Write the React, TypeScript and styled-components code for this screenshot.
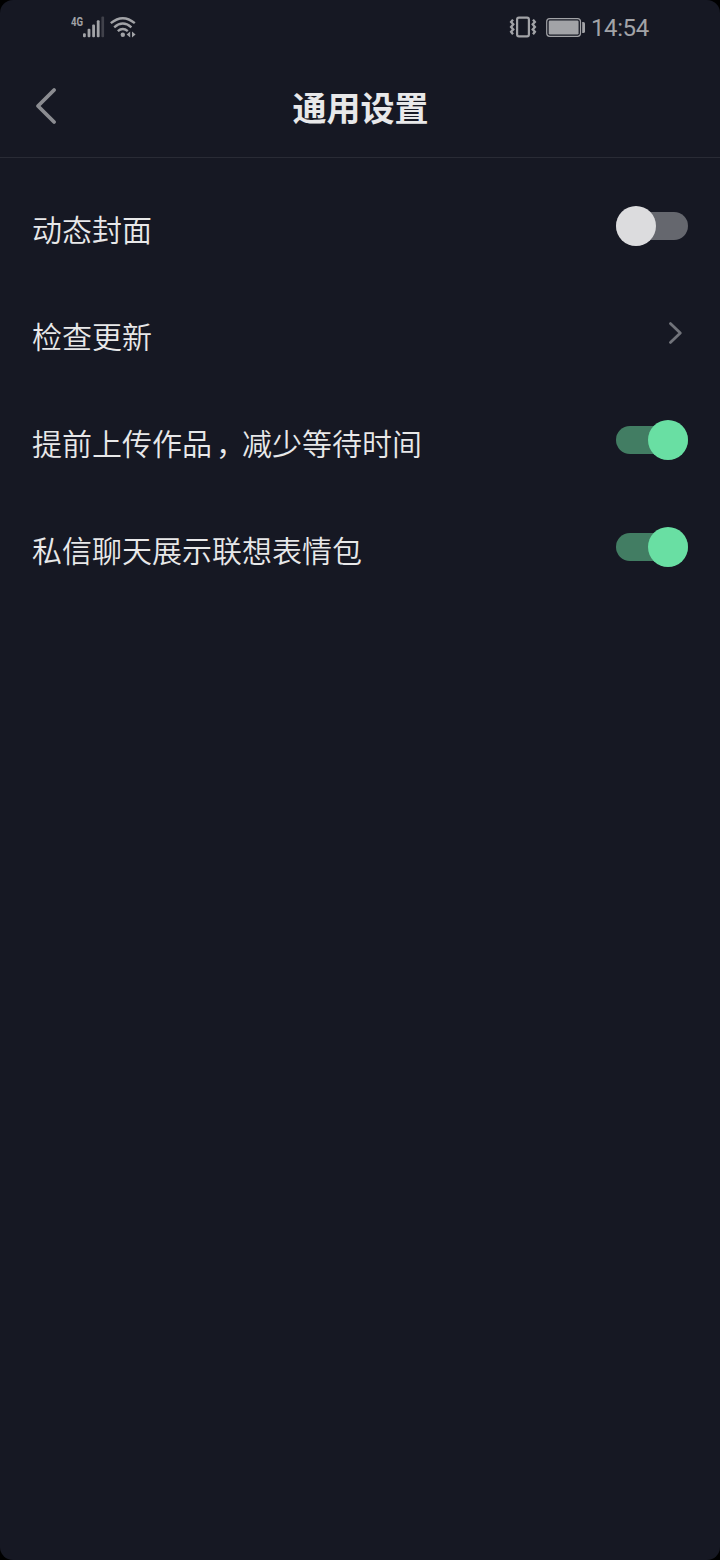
import React, { useState } from "react";
import styled, { createGlobalStyle } from "styled-components";

const GlobalStyle = createGlobalStyle`
  * { box-sizing: border-box; }
  body { margin: 0; background: #000; }
`;

const Screen = styled.main`
  display: flex;
  flex-direction: column;
  width: 720px;
  height: 1560px;
  border-radius: 13px;
  overflow: hidden;
  background: #161823;
  color: #e8e8e9;
  font-family: "Noto Sans CJK SC", sans-serif;
`;

const StatusBar = styled.div`
  display: flex;
  justify-content: space-between;
  height: 56px;
  padding: 0 70px 0 71px;
  color: #a2a3a7;
`;

const StatusGroup = styled.div`
  display: flex;
  align-items: flex-start;
`;

const Network = styled.span`
  width: 12px;
  padding-top: 15px;
  font: 700 12px/14px Roboto, sans-serif;
  white-space: nowrap;
  transform: scaleX(0.8);
  transform-origin: left;
`;

const Clock = styled.time`
  width: 59px;
  margin-left: 5px;
  padding-top: 14px;
  font: 400 24px/28px Roboto, sans-serif;
  letter-spacing: -0.4px;
  white-space: nowrap;
`;

const Header = styled.header`
  display: grid;
  grid-template-columns: 96px 1fr 96px;
  align-items: center;
  height: 102px;
  border-bottom: 1px solid #292b35;
`;

const BackButton = styled.button`
  display: flex;
  align-items: center;
  width: 96px;
  height: 100px;
  padding: 0 0 2px 32px;
  border: 0;
  background: none;
  color: #8b8c91;
`;

const Title = styled.h1`
  margin: 0;
  padding-left: 1px;
  font-size: 34px;
  line-height: 50px;
  font-weight: 700;
  text-align: center;
`;

const SettingsList = styled.section`
  display: flex;
  flex-direction: column;
  gap: 67px;
  padding: 48px 32px;
`;

const Row = styled.div`
  display: flex;
  align-items: center;
  justify-content: space-between;
  height: 40px;
`;

const Label = styled.span`
  padding-top: 3px;
  font-size: 30px;
  line-height: 44px;
  font-weight: 350;
`;

/* Half-width comma centred in a full-width cell. */
const Comma = styled.span`
  margin: 0 11px 0 4px;
  font-feature-settings: "halt";
`;

const Track = styled.button<{ $on: boolean }>`
  display: flex;
  align-items: center;
  justify-content: ${(p) => (p.$on ? "flex-end" : "flex-start")};
  width: 72px;
  height: 28px;
  padding: 0;
  border: 0;
  border-radius: 14px;
  background: ${(p) => (p.$on ? "#427d63" : "#65676e")};
`;

const Knob = styled.span<{ $on: boolean }>`
  flex: none;
  width: 40px;
  height: 40px;
  border-radius: 50%;
  background: ${(p) => (p.$on ? "#69dfa3" : "#dcdcde")};
`;

function Toggle({ initial, label }: { initial: boolean; label: string }) {
  const [on, setOn] = useState(initial);
  return (
    <Track $on={on} role="switch" aria-checked={on} aria-label={label} onClick={() => setOn(!on)}>
      <Knob $on={on} />
    </Track>
  );
}

const SignalIcon = () => (
  <svg width="22" height="48" viewBox="83 0 22 48" fill="currentColor">
    <rect x="83" y="33.3" width="2.8" height="3.9" rx="1" />
    <rect x="87.6" y="28.8" width="2.8" height="8.4" rx="1" />
    <rect x="92.2" y="24.6" width="2.8" height="12.6" rx="1" />
    <rect x="96.8" y="20.3" width="2.8" height="16.9" rx="1" />
    <rect x="101.4" y="16.6" width="2.7" height="20.6" rx="1" opacity=".3" />
  </svg>
);

const WifiIcon = () => (
  <svg width="32" height="48" viewBox="105 0 32 48" fill="none" stroke="currentColor" strokeWidth="2.4">
    <path d="M110.8 23.2Q122.8 13.2 134.8 23.2" />
    <path d="M114.2 27.3Q122.8 19.9 131.4 27.3" />
    <path d="M117.8 31.2Q122.8 26.9 127.8 31.2" />
    <circle cx="122.8" cy="34.8" r="2.2" fill="currentColor" stroke="none" />
    <path d="M130.2 31.4v6l-3.6-3zM132 31.4v6l3.6-3z" fill="currentColor" stroke="none" />
  </svg>
);

const VibrateIcon = () => (
  <svg width="28" height="48" viewBox="509 0 28 48" fill="none" stroke="currentColor">
    <rect x="517.1" y="17.6" width="11.8" height="18.8" rx="1.8" strokeWidth="2.2" />
    <path
      d="M513 19.6l-1.9 2.4 2.2 2.3-2.2 2.6 2.2 2.5-2.2 2.4 1.9 2.4M533 19.6l1.9 2.4-2.2 2.3 2.2 2.6-2.2 2.5 2.2 2.4-1.9 2.4"
      strokeWidth="2.3"
    />
  </svg>
);

const BatteryIcon = () => (
  <svg width="49" height="48" viewBox="537 0 49 48" fill="none">
    <rect x="546.7" y="18.7" width="33.8" height="17.6" rx="3" stroke="currentColor" strokeWidth="1.2" />
    <rect x="548.7" y="20.6" width="29.9" height="13.8" rx="1.2" fill="currentColor" />
    <path d="M582.2 22h1.2q1.6 0 1.6 1.6v7.8q0 1.6-1.6 1.6h-1.2z" fill="currentColor" />
  </svg>
);

export default function App() {
  return (
    <>
      <GlobalStyle />
      <Screen>
        <StatusBar>
          <StatusGroup>
            <Network>4G</Network>
            <SignalIcon />
            <WifiIcon />
          </StatusGroup>
          <StatusGroup>
            <VibrateIcon />
            <BatteryIcon />
            <Clock>14:54</Clock>
          </StatusGroup>
        </StatusBar>
        <Header>
          <BackButton aria-label="返回">
            <svg width="28" height="40" viewBox="32 86 28 40" fill="none" stroke="currentColor" strokeWidth="3.8" strokeLinecap="round" strokeLinejoin="round">
              <path d="M54.1 90 38 106l16.1 16" />
            </svg>
          </BackButton>
          <Title>通用设置</Title>
        </Header>
        <SettingsList>
          <Row>
            <Label>动态封面</Label>
            <Toggle initial={false} label="动态封面" />
          </Row>
          <Row>
            <Label>检查更新</Label>
            <svg width="24" height="28" viewBox="664 319 24 28" fill="none" stroke="#71737a" strokeWidth="2.8" strokeLinecap="round" strokeLinejoin="round">
              <path d="M670.4 323.6 680.3 333l-9.9 9.4" />
            </svg>
          </Row>
          <Row>
            <Label>
              提前上传作品<Comma>，</Comma>减少等待时间
            </Label>
            <Toggle initial label="提前上传作品，减少等待时间" />
          </Row>
          <Row>
            <Label>私信聊天展示联想表情包</Label>
            <Toggle initial label="私信聊天展示联想表情包" />
          </Row>
        </SettingsList>
      </Screen>
    </>
  );
}
